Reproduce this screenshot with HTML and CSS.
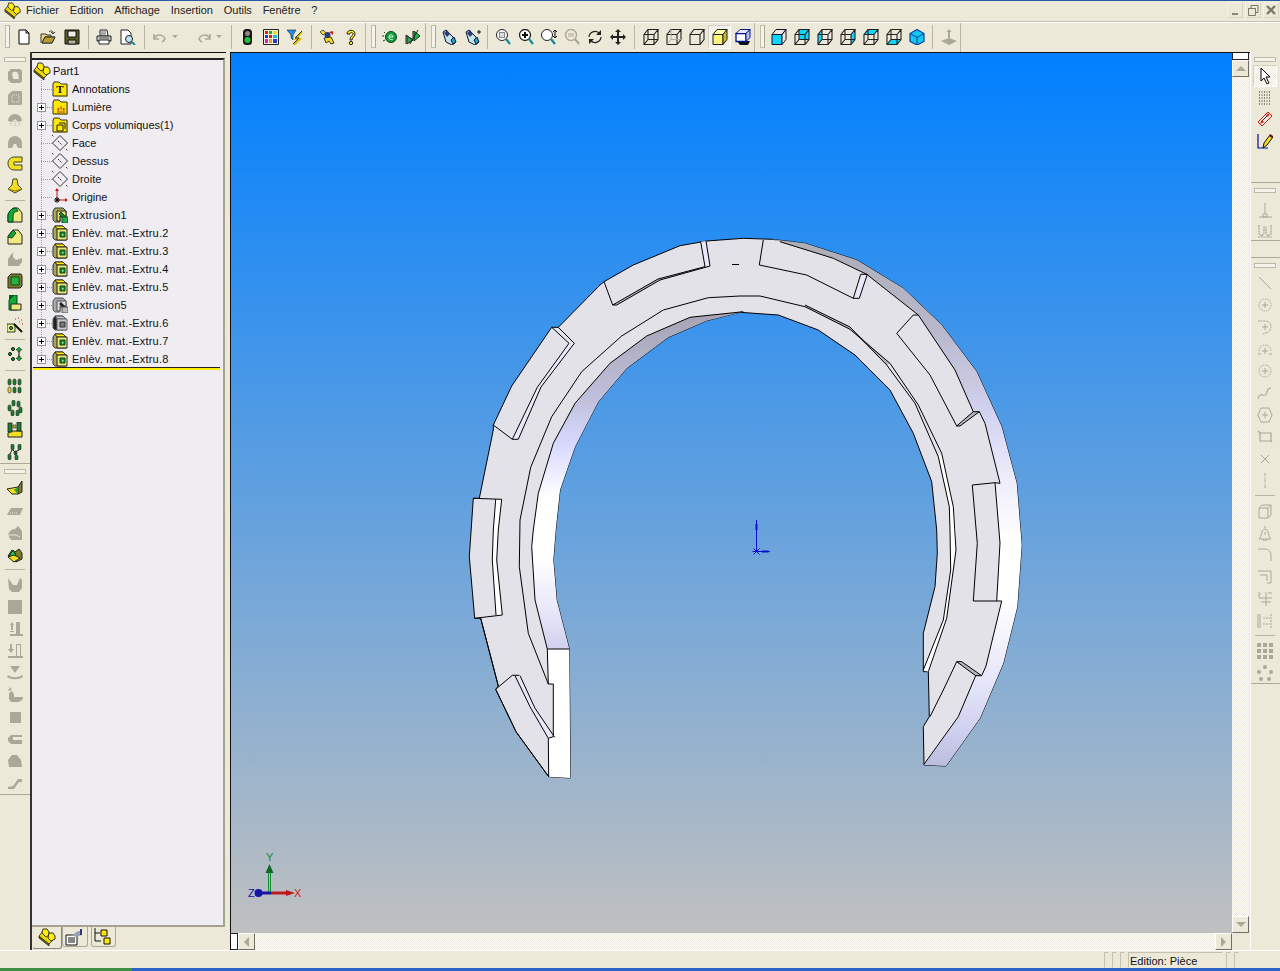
FILE: index.html
```html
<!DOCTYPE html>
<html lang="fr">
<head>
<meta charset="utf-8">
<title>Part1</title>
<link rel="stylesheet" href="styles.css">
</head>
<body>
<svg class="defs" width="0" height="0">
<defs>
<symbol id="part" viewBox="0 0 18 18"><path d="M1 8l10 8v2L1 10z" fill="#6e6800" stroke="#222" stroke-width=".8"/><path d="M1 8l5-6 11 8-6 6z" fill="#e8d800" stroke="#222" stroke-width=".8"/><path d="M5 1h4l2 3v3l-3 2-4-4z" fill="#ffec10" stroke="#222" stroke-width=".9"/><path d="M11 5h4l2 3v3l-4 2-3-3z" fill="#ffec10" stroke="#222" stroke-width=".9"/></symbol>
<symbol id="fold" viewBox="0 0 16 16"><path d="M1 3l1-2h5l2 2h6v12H1z" fill="#ffe800" stroke="#333"/><path d="M14 4h2v11H3v-0" fill="none" stroke="#8a8000"/></symbol>
<symbol id="plane" viewBox="0 0 18 18"><path d="M9 1.500L16.500 9 9 16.500 1.500 9z" fill="none" stroke="#333"/><path d="M1 1l2 2M15 15l2 2M7 7l4 4" stroke="#333" stroke-dasharray="2 1"/></symbol>
<symbol id="orig" viewBox="0 0 18 18"><path d="M6 12V2M6 12h9" stroke="#d01010" fill="none"/><path d="M6 0l-2 3h4zM17 12l-3-2v4z" fill="#d01010"/><path d="M4 10l4 4M8 10l-4 4M3 12h6M6 9v6" stroke="#000"/></symbol>
<symbol id="feat" viewBox="0 0 16 16"><path d="M1 4l2-3h8l3 3v11H3L1 13z" fill="#a8a858" stroke="#333"/><path d="M3 1h8l3 3H5z" fill="#ffe800" stroke="#333"/><path d="M5 4h10v11H5z" fill="#ece478" stroke="#222"/><path d="M8 7h5v5H8z" fill="#148c34" stroke="#0b4a1c"/><path d="M10 9h1.500v1.500H10z" fill="#b8e0a0"/></symbol>
<symbol id="extr" viewBox="0 0 16 16"><path d="M1 4l2-3h8l3 3v6H8v5H3L1 13z" fill="#a8a858" stroke="#333"/><path d="M5 4h9v5H8v5H5z" fill="#e8e070" stroke="#222"/><path d="M7 7l2-2 6 6-2 2z" fill="#1c8030" stroke="#0b4a1c"/><path d="M10 10h6v6h-6z" fill="#28b048" stroke="#0b4a1c"/></symbol>
<symbol id="feag" viewBox="0 0 16 16"><path d="M1 4l2-3h8l3 3v11H3L1 13z" fill="#222" stroke="#555"/><path d="M3 1h8l3 3H5z" fill="#bbb" stroke="#555"/><path d="M5 4h10v11H5z" fill="#c8c8c8" stroke="#666"/><path d="M8 7h5v5H8z" fill="#777" stroke="#333"/></symbol>
<symbol id="extg" viewBox="0 0 16 16"><path d="M1 4l2-3h8l3 3v6H8v5H3L1 13z" fill="#a8a8a8" stroke="#555"/><path d="M5 4h9v5H8v5H5z" fill="#ddd" stroke="#555"/><path d="M7 7l2-2 6 6-2 2z" fill="#222"/><path d="M10 10h6v6h-6z" fill="#bbb" stroke="#555"/></symbol>

<symbol id="new" viewBox="0 0 16 16"><path d="M3 1h7l3 3v11H3z" fill="#fff" stroke="#000"/><path d="M10 1v3h3" fill="none" stroke="#000"/></symbol>
<symbol id="open" viewBox="0 0 16 16"><path d="M1 14V5h5l1 1h4v2H5L2 14h10l3-6H5" fill="#e8d880" stroke="#333"/><path d="M2 14l3-6h10l-3 6z" fill="#b89c30" stroke="#333"/><path d="M9 3c2-2 4-1 4 1M15 3l-2 2-2-2" fill="none" stroke="#333"/></symbol>
<symbol id="save" viewBox="0 0 16 16"><path d="M1 1h14v14H1z" fill="#5c5c24" stroke="#111"/><path d="M4 2h8v6H4z" fill="#eee" stroke="#111"/><path d="M4 11h8v4H4z" fill="#b4b4a0" stroke="#111"/></symbol>
<symbol id="print" viewBox="0 0 16 16"><path d="M4 1h7l1 6H4z" fill="#fff" stroke="#222"/><path d="M1 7h14v5H1z" fill="#ccc" stroke="#222"/><path d="M3 11h10v4H3z" fill="#fff" stroke="#222"/><path d="M3 9h10M5 3h5M5 5h5" stroke="#555"/></symbol>
<symbol id="prev" viewBox="0 0 16 16"><path d="M1 1h7l3 3v11H1z" fill="#fff" stroke="#222"/><circle cx="9" cy="10" r="3.500" fill="#bfe4f4" stroke="#222"/><path d="M12 13l3 3" stroke="#148c9c" stroke-width="2"/></symbol>
<symbol id="undo" viewBox="0 0 16 16"><path d="M2 5v5h5M2 9c3-4 9-4 11 1-1 1-1 2-3 3" fill="none" stroke="#aca899" stroke-width="1.500"/></symbol>
<symbol id="redo" viewBox="0 0 16 16"><path d="M14 5v5H9M14 9c-3-4-9-4-11 1 1 1 1 2 3 3" fill="none" stroke="#aca899" stroke-width="1.500"/></symbol>
<symbol id="traf" viewBox="0 0 16 16"><rect x="4" y="0" width="9" height="16" rx="3.500" fill="#181818"/><circle cx="8.500" cy="4.500" r="2.500" fill="#8a8a80"/><circle cx="8.500" cy="11" r="3" fill="#14c838"/></symbol>
<symbol id="pal" viewBox="0 0 16 16"><path d="M0.500 0.500h15v15H0.500z" fill="#f4f0d8" stroke="#222"/><path d="M2 2h3v3H2z" fill="#e01818"/><path d="M6 2h3v3H6z" fill="#18a838"/><path d="M10 2h4v3h-4z" fill="#e8e018"/><path d="M2 6h3v3H2z" fill="#2038d8"/><path d="M6 6h3v3H6z" fill="#e01818"/><path d="M10 6h4v3h-4z" fill="#18b8e0"/><path d="M2 10h3v4H2z" fill="#e018c8"/><path d="M6 10h3v4H6z" fill="#e8a018"/><path d="M10 10h4v4h-4z" fill="#2038d8"/></symbol>
<symbol id="filt" viewBox="0 0 16 16"><path d="M0 1h9L6 6v5L4 9V6z" fill="#1c90f0" stroke="#222" stroke-width=".6"/><path d="M15 3L9 10h4l-6 6" fill="none" stroke="#d8c000" stroke-width="2"/><path d="M15 2L8 9h4l-6 6" fill="none" stroke="#333"/></symbol>
<symbol id="wiz" viewBox="0 0 16 16"><path d="M1 3l3-2 3 3-3 2z" fill="#f0dc20" stroke="#554"/><circle cx="8.500" cy="6" r="3" fill="#2c3c88"/><path d="M5 9l7-1 3 6-3 1-2-3-3 2z" fill="#f0dc20" stroke="#333"/><path d="M10 3l4-1v4z" fill="#d02010"/></symbol>
<symbol id="help" viewBox="0 0 16 16"><path d="M4 5c0-5 8-5 8 0 0 3-3 3-3 6H7c0-4 3-4 3-6 0-2-3-2-3 0z" fill="#ffe800" stroke="#222"/><circle cx="8" cy="14" r="1.700" fill="#ffe800" stroke="#222"/></symbol>
<symbol id="eic" viewBox="0 0 16 16"><circle cx="10" cy="8" r="5.500" fill="#129c3c" stroke="#0a3c1c"/><path d="M8 8h4c0-3-4-3-4 0s3 3 4 2" fill="none" stroke="#e0ffe0"/><path d="M3 3l1 1M1 7h2M2 12l2-1" stroke="#333"/></symbol>
<symbol id="fip" viewBox="0 0 16 16"><path d="M1 15V6l7 5V2" fill="none" stroke="#222"/><path d="M2 7l6 4-6 4z" fill="#18b848" stroke="#222"/><path d="M9 2l6 5-6 5z" fill="#18b848" stroke="#222"/><path d="M13 1L5 15" stroke="#222"/></symbol>
<symbol id="lamp" viewBox="0 0 16 16"><path d="M1 3l3-2 7 7 2 6-3 2-6-3z" fill="#c4e4ec" stroke="#113"/><path d="M2 4l3-3 3 4-3 3z" fill="#2c3c78"/><path d="M9 11l3-3 2 5-3 2z" fill="#18a8c8" stroke="#113"/></symbol>
<symbol id="lamp2" viewBox="0 0 16 16"><use href="#lamp"/><path d="M12 3h4M14 1v4" stroke="#111"/></symbol>
<symbol id="zfit" viewBox="0 0 16 16"><circle cx="7" cy="6" r="5.500" fill="#fff" stroke="#222"/><path d="M4 3h6v6H4z" fill="#888"/><path d="M5 4h4v4H5z" fill="#ddd"/><path d="M11 10l4 5" stroke="#1488a0" stroke-width="2.200"/></symbol>
<symbol id="zin" viewBox="0 0 16 16"><circle cx="7" cy="6" r="5.500" fill="#fff" stroke="#222" stroke-width="1.300"/><path d="M7 3v6M4 6h6" stroke="#111" stroke-width="2"/><path d="M11 10l4 5" stroke="#1488a0" stroke-width="2.200"/></symbol>
<symbol id="zar" viewBox="0 0 16 16"><circle cx="6" cy="6" r="5.500" fill="#fff" stroke="#222"/><path d="M14 1v8M12 3l2-2 2 2M12 7l2 2 2-2" fill="none" stroke="#111"/><path d="M10 10l4 5" stroke="#1488a0" stroke-width="2.200"/></symbol>
<symbol id="zout" viewBox="0 0 16 16"><circle cx="7" cy="6" r="5.500" fill="#ece9d8" stroke="#aca899" stroke-width="1.400"/><path d="M4 5h6M4 7h6" stroke="#aca899"/><path d="M11 10l4 5" stroke="#aca899" stroke-width="2.200"/></symbol>
<symbol id="rot" viewBox="0 0 16 16"><path d="M2 8a6 6 0 0 1 10-4M14 8a6 6 0 0 1-10 4" fill="none" stroke="#222" stroke-width="1.200"/><path d="M14 1v5H9zM2 15v-5h5z" fill="#222"/></symbol>
<symbol id="pan" viewBox="0 0 16 16"><path d="M8 0l3 3H9v4h4V5l3 3-3 3V9H9v4h2l-3 3-3-3h2V9H3v2L0 8l3-3v2h4V3H5z" fill="#222"/></symbol>
<symbol id="cw" viewBox="0 0 16 16"><path d="M1 5.500h10v10H1zM1 5.500l4-5h10l-4 5M11 5.500v10l4-5v-10M5 .5v10h10M5 10.500l-4 5" fill="none" stroke="#222" stroke-width="1.100"/></symbol>
<symbol id="chl" viewBox="0 0 16 16"><path d="M1 5.500h10v10H1zM1 5.500l4-5h10l-4 5M11 5.500v10l4-5v-10" fill="none" stroke="#222" stroke-width="1.100"/><path d="M5 .5v10h10M5 10.500l-4 5" fill="none" stroke="#aaa"/></symbol>
<symbol id="cno" viewBox="0 0 16 16"><path d="M1 5.500h10v10H1zM1 5.500l4-5h10l-4 5M11 5.500v10l4-5v-10" fill="none" stroke="#222" stroke-width="1.100"/></symbol>
<symbol id="csh" viewBox="0 0 16 16"><path d="M1 5.500h10v10H1z" fill="#fbf37a" stroke="#222"/><path d="M1 5.500l4-5h10l-4 5z" fill="#fffca8" stroke="#222"/><path d="M11 5.500v10l4-5v-10z" fill="#c8bc30" stroke="#222"/></symbol>
<symbol id="csd" viewBox="0 0 16 16"><path d="M2 12h13l-2 4H5z" fill="#111"/><path d="M1 4.500h10v8H1z" fill="#fff" stroke="#00148c" stroke-width="1.300"/><path d="M1 4.500l4-4h10l-4 4z" fill="#e8e8ff" stroke="#00148c"/><path d="M11 4.500v8l4-4v-8z" fill="#c0c0f0" stroke="#00148c"/></symbol>
<symbol id="vfr" viewBox="0 0 16 16"><path d="M1 5.500h10v10H1z" fill="#12d4f8" stroke="#113"/><path d="M1 5.500l4-5h10l-4 5zM11 5.500v10l4-5v-10z" fill="#ece9d8" stroke="#113"/></symbol>
<symbol id="vbk" viewBox="0 0 16 16"><path d="M5 .5h10v10H5z" fill="#12d4f8"/><use href="#cw"/></symbol>
<symbol id="vlf" viewBox="0 0 16 16"><path d="M1 5.500l4-5v10l-4 5z" fill="#12d4f8"/><use href="#cw"/></symbol>
<symbol id="vrt" viewBox="0 0 16 16"><path d="M11 5.500l4-5v10l-4 5z" fill="#12d4f8"/><use href="#cw"/></symbol>
<symbol id="vtp" viewBox="0 0 16 16"><path d="M1 5.500l4-5h10l-4 5z" fill="#12d4f8"/><use href="#cw"/></symbol>
<symbol id="vbt" viewBox="0 0 16 16"><path d="M1 15.500l4-5h10l-4 5z" fill="#12d4f8"/><use href="#cw"/></symbol>
<symbol id="viso" viewBox="0 0 16 16"><path d="M8 .5l7 4v8l-7 3.500-7-3.500v-8z" fill="#12c8f0" stroke="#0c3c9c" stroke-width="1.200"/><path d="M1 4.500l7 4 7-4M8 8.500V16" fill="none" stroke="#0c3c9c"/></symbol>
<symbol id="flat" viewBox="0 0 16 16"><path d="M8 9L16 12 8 16 0 12z" fill="#aca899"/><path d="M8 0l2.500 3H9v6H7V3H5.500z" fill="#aca899"/></symbol>

<symbol id="g1" viewBox="0 0 16 16"><path d="M1 4l3-3h9l2 2v10l-2 2H4l-3-3z" fill="#aca899"/><path d="M5 5a4 4 0 0 1 6 0l1 6H6z" fill="#ece9d8"/></symbol>
<symbol id="g2" viewBox="0 0 16 16"><path d="M1 5l4-4h9l1 1v12l-1 1H1z" fill="#aca899"/><path d="M5 5h7v7H5z" fill="none" stroke="#ece9d8" stroke-dasharray="1 1"/></symbol>
<symbol id="g3" viewBox="0 0 16 16"><path d="M1 9a7 7 0 0 1 14 0l-4 1-3-3-3 3z" fill="#aca899"/><path d="M3 11l2 3M8 9v5M13 11l-2 3" stroke="#aca899" stroke-dasharray="1 1"/></symbol>
<symbol id="g4" viewBox="0 0 16 16"><path d="M1 9a7 7 0 0 1 14 0v5h-4l-2-4H7l-2 4H1z" fill="#aca899"/></symbol>
<symbol id="yc" viewBox="0 0 16 16"><path d="M1 7a6 6 0 0 1 6-6h8v5H7v3h8v5H7a6 6 0 0 1-6-6z" fill="#f0e020" stroke="#443" /><path d="M7 6h8" stroke="#a09000"/></symbol>
<symbol id="ybell" viewBox="0 0 16 16"><path d="M6 1h4l1 6 4 4-7 4-7-4 4-4z" fill="#f0dc20" stroke="#443"/><path d="M1 11l7 2 7-2" fill="none" stroke="#8a8000"/></symbol>
<symbol id="h1" viewBox="0 0 16 16"><path d="M1 7l5-6h5l4 5v9H1z" fill="#f0e880" stroke="#222"/><path d="M1 9a8 8 0 0 1 8-8l2 3a5 5 0 0 0-5 5v6H1z" fill="#14a838" stroke="#0b4a1c"/></symbol>
<symbol id="h2" viewBox="0 0 16 16"><path d="M1 7l5-6h5l4 5v9H1z" fill="#f0e880" stroke="#222"/><path d="M1 8l5-7 3 3-4 5z" fill="#14a838" stroke="#0b4a1c"/></symbol>
<symbol id="gh" viewBox="0 0 16 16"><path d="M1 15V8l5-7v5l3 3 6-2v4l-3 4z" fill="#aca899"/></symbol>
<symbol id="gb" viewBox="0 0 16 16"><path d="M1 4l3-3h10l1 2v10l-2 2H1z" fill="#7c7c20" stroke="#222"/><path d="M4 4h8v8H4z" fill="#28b048" stroke="#0b4a1c"/></symbol>
<symbol id="gy" viewBox="0 0 16 16"><path d="M2 0h8v6H2z" fill="#085c24"/><path d="M2 5l5-5 3 0v15H2z" fill="#14a838" stroke="#0b4a1c"/><path d="M4 9h10v6H4z" fill="#f0e880" stroke="#222"/></symbol>
<symbol id="wand" viewBox="0 0 16 16"><path d="M0 7h8v8H0z" fill="#f0e880" stroke="#243"/><circle cx="4" cy="11" r="1.500" fill="#14a838" stroke="#132"/><path d="M15 15L7 7" stroke="#111" stroke-width="2"/><path d="M8 2h1M11 1h1M14 3h1M12 5h1M15 7h1" stroke="#a03030"/></symbol>
<symbol id="arrs" viewBox="0 0 16 16"><circle cx="3" cy="8" r="1.500" fill="#14a838" stroke="#111"/><circle cx="6" cy="3" r="1.500" fill="#14a838" stroke="#111"/><circle cx="6" cy="13" r="1.500" fill="#14a838" stroke="#111"/><path d="M12 1l3 3h-2v2h-2V4H9zM11 10h2v2h2l-3 3-3-3h2z" fill="#14a838" stroke="#111" stroke-width=".5"/><path d="M12 6v4" stroke="#111"/></symbol>
<symbol id="pl" viewBox="0 0 16 16"><g fill="#1c7c30" stroke="#222" stroke-width=".6"><rect x="1" y="1" width="3" height="6" rx="1.500"/><rect x="6" y="1" width="3" height="6" rx="1.500"/><rect x="11" y="1" width="3" height="6" rx="1.500"/></g><g fill="#d8d040" stroke="#222" stroke-width=".6"><rect x="1" y="9" width="3" height="6" rx="1.500"/></g><g fill="#1c7c30" stroke="#222" stroke-width=".6"><rect x="6" y="9" width="3" height="6" rx="1.500"/><rect x="11" y="9" width="3" height="6" rx="1.500"/></g></symbol>
<symbol id="pc" viewBox="0 0 16 16"><g fill="#1c7c30" stroke="#222" stroke-width=".6"><rect x="5" y="0" width="3" height="6" rx="1.500"/><rect x="10" y="1" width="3" height="6" rx="1.500"/><rect x="1" y="5" width="3" height="6" rx="1.500"/><rect x="12" y="7" width="3" height="6" rx="1.500"/><rect x="4" y="10" width="3" height="6" rx="1.500"/><rect x="9" y="10" width="3" height="6" rx="1.500"/></g></symbol>
<symbol id="pm" viewBox="0 0 16 16"><path d="M1 15v-4l4-2h10v6z" fill="#f0e020" stroke="#222"/><rect x="1" y="1" width="4" height="9" fill="#1c7c30" stroke="#222" stroke-width=".8"/><rect x="10" y="0" width="4" height="9" fill="#1c7c30" stroke="#222" stroke-width=".8"/><path d="M6 6h3V3H6z" fill="#c8c020" stroke="#222" stroke-width=".6"/></symbol>
<symbol id="pt" viewBox="0 0 16 16"><g fill="#1c7c30" stroke="#222" stroke-width=".6"><rect x="4" y="0" width="3" height="6" rx="1.500"/><rect x="11" y="0" width="3" height="6" rx="1.500"/><rect x="7" y="7" width="3" height="4" rx="1.500"/><rect x="1" y="10" width="3" height="6" rx="1.500"/><rect x="8" y="11" width="3" height="5" rx="1.500"/></g><path d="M5 6l-2 4M6 6l2 2 4-2M9 11V9" stroke="#222" fill="none"/></symbol>
<symbol id="fold3" viewBox="0 0 18 18"><path d="M1 10l11-2v7H6z" fill="#f0e020" stroke="#222"/><path d="M12 8l4-6v11l-4 2z" fill="#7c7c20" stroke="#222"/><path d="M8 11l4-3v7z" fill="#14a838"/></symbol>
<symbol id="gp" viewBox="0 0 16 16"><path d="M0 12l4-7h12l-3 7z" fill="#aca899"/><path d="M3 10h7" stroke="#ece9d8" stroke-dasharray="1 1"/></symbol>
<symbol id="gr" viewBox="0 0 16 16"><path d="M1 10a8 8 0 0 1 7-6l3-3 4 5v9H4z" fill="#aca899"/><path d="M1 10h8l4 2" stroke="#ece9d8" fill="none"/></symbol>
<symbol id="mix" viewBox="0 0 16 16"><path d="M1 9l4-6 3 2 4-3 3 4v6l-6 3z" fill="#7c7c20" stroke="#222"/><path d="M2 9l4-6 3 5-5 2z" fill="#14d040" stroke="#222"/><path d="M1 10l6-2 6 3-6 4z" fill="#f0e020" stroke="#222"/></symbol>
<symbol id="gu" viewBox="0 0 16 16"><path d="M1 1l5 7h4l3-7 2 2v8l-3 4H5l-3-3z" fill="#aca899"/></symbol>
<symbol id="gsq" viewBox="0 0 16 16"><path d="M1 1h14v14H1z" fill="#aca899"/></symbol>
<symbol id="gup" viewBox="0 0 16 16"><path d="M3 15h13v-2H3zM9 1h4v12H9zM5 1l2 3H3zM4 4h2v5H4zM3 10h4v1H3z" fill="#aca899"/></symbol>
<symbol id="gdn" viewBox="0 0 16 16"><path d="M1 15h15v-2H1zM9 1h5v12h-1V2h-3v11H9zM3 1h2v6H3zM1 6h6l-3 4z" fill="#aca899"/></symbol>
<symbol id="gbowl" viewBox="0 0 16 16"><path d="M3 1h10L8 8zM1 10c4 3 10 3 14 0l1 2c-5 3-11 3-16 0z" fill="#aca899"/></symbol>
<symbol id="gduck" viewBox="0 0 16 16"><path d="M2 6l3-2 2 3v3h9c0 3-3 5-6 5H4L2 12z" fill="#aca899"/><path d="M3 0l2 3-4 1z" fill="#aca899"/></symbol>
<symbol id="gsm" viewBox="0 0 16 16"><path d="M3 3h11v11H3z" fill="#aca899"/></symbol>
<symbol id="gcl" viewBox="0 0 16 16"><path d="M1 7l3-3h11v2H6v3h9v4H4l-3-3z" fill="#aca899"/></symbol>
<symbol id="gdo" viewBox="0 0 16 16"><path d="M1 7l4-5h5l4 5 1 7H2z" fill="#aca899"/></symbol>
<symbol id="gsl" viewBox="0 0 16 16"><path d="M1 12l5-1 5-7h4v3h-3l-5 7H1z" fill="#aca899"/></symbol>

<symbol id="arrow" viewBox="0 0 16 16"><path d="M4 0v13l3-3 3 6 2-1-3-6h4z" fill="#fff" stroke="#000"/></symbol>
<symbol id="grid" viewBox="0 0 16 16"><path d="M2 2h12M2 5h12M2 8h12M2 11h12M2 14h12" stroke="#222" stroke-dasharray="1 1.500"/></symbol>
<symbol id="dim" viewBox="0 0 16 16"><path d="M1 11l10-10 4 4-10 10z" fill="none" stroke="#d01818"/><path d="M4 11l7-7" stroke="#222"/><path d="M3 13l2-4 2 2zM13 2l-4 2 2 2z" fill="#d01818"/></symbol>
<symbol id="sk" viewBox="0 0 16 16"><path d="M1 1v14h10" fill="none" stroke="#000c9c" stroke-width="1.200"/><path d="M6 15l1-5 6-8 3 2-6 8z" fill="#f0e020" stroke="#111"/><path d="M12 3l1-2 3 2-1 2z" fill="#6c1010"/></symbol>
<symbol id="r1" viewBox="0 0 16 16"><path d="M8 1v11M2 15h13M6 12h4v3H6z" fill="none" stroke="#aca899"/></symbol>
<symbol id="r2" viewBox="0 0 16 16"><path d="M1 15h14M2 3v9l3 2 2-3V4M14 3v9l-3 2-2-3V4" fill="none" stroke="#aca899" stroke-width="1.200" stroke-dasharray="2 .6"/></symbol>
<symbol id="r3" viewBox="0 0 16 16"><path d="M2 2l12 12" stroke="#aca899"/></symbol>
<symbol id="r4" viewBox="0 0 16 16"><circle cx="8" cy="8" r="6" fill="none" stroke="#aca899" stroke-dasharray="1.500 .8"/><path d="M8 5v6M5 8h6" stroke="#aca899"/></symbol>
<symbol id="r5" viewBox="0 0 16 16"><path d="M1 2h7a6 6 0 0 1 0 12l-2 1" fill="none" stroke="#aca899" stroke-dasharray="2 .6"/><path d="M8 5v6M5 8h6" stroke="#aca899"/></symbol>
<symbol id="r6" viewBox="0 0 16 16"><path d="M2 10a6 6 0 0 1 12 0" fill="none" stroke="#aca899" stroke-dasharray="1.500 .8"/><path d="M8 7v6M5 10h6M1 13h3M12 13h3" stroke="#aca899"/></symbol>
<symbol id="r7" viewBox="0 0 16 16"><path d="M1 14c1-4 3-5 5-4s4-1 4-3 2-4 4-4" fill="none" stroke="#aca899" stroke-width="1.100"/></symbol>
<symbol id="r8" viewBox="0 0 16 16"><path d="M4 1h8l3 7-3 7H4L1 8z" fill="none" stroke="#aca899"/><path d="M8 5v6M5 8h6" stroke="#aca899"/></symbol>
<symbol id="r9" viewBox="0 0 16 16"><path d="M3 4h11v8H3zM1 2l3 3M13 11l2 2" fill="none" stroke="#aca899" stroke-width="1.200"/></symbol>
<symbol id="r10" viewBox="0 0 16 16"><path d="M4 4l8 8M12 4l-8 8" stroke="#aca899"/></symbol>
<symbol id="r11" viewBox="0 0 16 16"><path d="M8 0v16" stroke="#aca899" stroke-dasharray="3 1 1 1"/></symbol>
<symbol id="r12" viewBox="0 0 16 16"><path d="M2 5h9v10H2zM2 5l3-3h9l-3 3M11 15l3-3V2" fill="none" stroke="#aca899"/></symbol>
<symbol id="r13" viewBox="0 0 16 16"><path d="M8 1v2M2 14c3-2 2-10 6-10s3 8 6 10zM6 14a2 2 0 0 0 4 0M8 7v3" fill="none" stroke="#aca899"/></symbol>
<symbol id="r14" viewBox="0 0 16 16"><path d="M1 2h7c4 0 6 3 6 6v6" fill="none" stroke="#aca899"/></symbol>
<symbol id="r15" viewBox="0 0 16 16"><path d="M1 2h13v12H10M3 6h7v6" fill="none" stroke="#aca899"/></symbol>
<symbol id="r16" viewBox="0 0 16 16"><path d="M9 1v14M2 7h13M4 11h10M1 2c3-1 3 2 1 2s2 2 0 3M11 2h4" fill="none" stroke="#aca899"/></symbol>
<symbol id="r17" viewBox="0 0 16 16"><path d="M1 1v14M3 1v14" stroke="#aca899"/><path d="M14 1v14M6 5h7M6 11h7" stroke="#aca899" stroke-dasharray="2 1"/></symbol>
<symbol id="r18" viewBox="0 0 16 16"><path d="M0 0h4v4H0zM6 0h4v4H6zM12 0h4v4h-4zM0 6h4v4H0zM6 6h4v4H6zM12 6h4v4h-4zM0 12h4v4H0zM6 12h4v4H6zM12 12h4v4h-4z" fill="#aca899"/></symbol>
<symbol id="r19" viewBox="0 0 16 16"><g fill="#aca899"><circle cx="8" cy="2" r="2"/><circle cx="2" cy="7" r="2"/><circle cx="14" cy="7" r="2"/><circle cx="4" cy="14" r="2"/><circle cx="12" cy="14" r="2"/></g></symbol>
<symbol id="wdoc" viewBox="0 0 18 18"><path d="M1 7h11v10H1z" fill="#fff" stroke="#111"/><path d="M3 10h7M3 12h7M3 14h7" stroke="#111"/><path d="M7 7l6-4 4 0v4l-6 2z" fill="#98a0b4"/><path d="M15 1h2v6h-2z" fill="#2c3c78"/></symbol>
<symbol id="cfg" viewBox="0 0 18 18"><path d="M1 0v13h6M1 5h5" fill="none" stroke="#111"/><path d="M7 2h6v6H7zM10 10h6v6h-6z" fill="#ffe800" stroke="#111"/></symbol>
</defs>
</svg>

<div class="app">
  <div class="topline"></div>
  <div class="menubar">
    <svg class="logo"><use href="#part"/></svg>
    <span class="mi m1">Fichier</span><span class="mi">Edition</span><span class="mi">Affichage</span><span class="mi">Insertion</span><span class="mi">Outils</span><span class="mi">Fenêtre</span><span class="mi">?</span>
    <div class="winbtns">
      <div class="wb"><svg class="wi" viewBox="0 0 12 12"><path d="M3 9h6v2H3z" fill="#8b8878"/></svg></div>
      <div class="wb"><svg class="wi" viewBox="0 0 12 12"><path d="M1.500 4.500h7v7h-7zM4 4V1.500h7v7H9" fill="none" stroke="#7c796a"/><path d="M1 4h8v1H1zM4 1h7v1H4z" fill="#7c796a"/></svg></div>
      <div class="wb"><svg class="wi" viewBox="0 0 12 12"><path d="M2 2l8 8M10 2l-8 8" stroke="#7c796a" stroke-width="2.400"/></svg></div>
    </div>
  </div>
  <div class="barline"></div>
  <div class="toolbars">
    <div class="tbar t1">
      <i class="grip"></i>
      <div class="b"><svg class="i"><use href="#new"/></svg></div><div class="b"><svg class="i"><use href="#open"/></svg></div><div class="b"><svg class="i"><use href="#save"/></svg></div>
      <i class="sep"></i>
      <div class="b"><svg class="i"><use href="#print"/></svg></div><div class="b"><svg class="i"><use href="#prev"/></svg></div>
      <i class="sep"></i>
      <div class="b wide"><svg class="i"><use href="#undo"/></svg><i class="caret"></i></div>
      <div class="b wide gapl"><svg class="i"><use href="#redo"/></svg><i class="caret"></i></div>
      <i class="sep s2"></i>
      <div class="b"><svg class="i"><use href="#traf"/></svg></div><div class="b"><svg class="i"><use href="#pal"/></svg></div><div class="b"><svg class="i"><use href="#filt"/></svg></div>
      <i class="sep"></i>
      <div class="b"><svg class="i"><use href="#wiz"/></svg></div><div class="b"><svg class="i"><use href="#help"/></svg></div>
    </div>
    <div class="tbar t2">
      <i class="grip"></i>
      <div class="b"><svg class="i"><use href="#eic"/></svg></div><div class="b"><svg class="i"><use href="#fip"/></svg></div>
    </div>
    <div class="tbar t3">
      <i class="grip"></i>
      <div class="c"><svg class="i"><use href="#lamp"/></svg></div><div class="c"><svg class="i"><use href="#lamp2"/></svg></div>
      <i class="sep s5"></i>
      <div class="c"><svg class="i"><use href="#zfit"/></svg></div><div class="c"><svg class="i"><use href="#zin"/></svg></div><div class="c"><svg class="i"><use href="#zar"/></svg></div><div class="c"><svg class="i"><use href="#zout"/></svg></div><div class="c"><svg class="i"><use href="#rot"/></svg></div><div class="c"><svg class="i"><use href="#pan"/></svg></div>
      <i class="sep s4"></i>
      <div class="c"><svg class="i"><use href="#cw"/></svg></div><div class="c"><svg class="i"><use href="#chl"/></svg></div><div class="c"><svg class="i"><use href="#cno"/></svg></div><div class="c on"><svg class="i"><use href="#csh"/></svg></div><div class="c"><svg class="i"><use href="#csd"/></svg></div>
    </div>
    <div class="tbar t4">
      <i class="grip"></i>
      <div class="c"><svg class="i"><use href="#vfr"/></svg></div><div class="c"><svg class="i"><use href="#vbk"/></svg></div><div class="c"><svg class="i"><use href="#vlf"/></svg></div><div class="c"><svg class="i"><use href="#vrt"/></svg></div><div class="c"><svg class="i"><use href="#vtp"/></svg></div><div class="c"><svg class="i"><use href="#vbt"/></svg></div><div class="c"><svg class="i"><use href="#viso"/></svg></div>
      <i class="sep s6"></i>
      <div class="c"><svg class="i"><use href="#flat"/></svg></div>
    </div>
  </div>

  <div class="main">
    <div class="lstrip">
      <i class="hgrip lg"></i>
      <div class="lb"><svg class="i"><use href="#g1"/></svg></div><div class="lb"><svg class="i"><use href="#g2"/></svg></div><div class="lb"><svg class="i"><use href="#g3"/></svg></div><div class="lb"><svg class="i"><use href="#g4"/></svg></div><div class="lb"><svg class="i"><use href="#yc"/></svg></div><div class="lb"><svg class="i"><use href="#ybell"/></svg></div>
      <i class="ls ls1"></i>
      <div class="lb"><svg class="i"><use href="#h1"/></svg></div><div class="lb"><svg class="i"><use href="#h2"/></svg></div><div class="lb"><svg class="i"><use href="#gh"/></svg></div><div class="lb"><svg class="i"><use href="#gb"/></svg></div><div class="lb"><svg class="i"><use href="#gy"/></svg></div><div class="lb"><svg class="i"><use href="#wand"/></svg></div>
      <i class="ls ls1"></i>
      <div class="lb"><svg class="i"><use href="#arrs"/></svg></div>
      <i class="ls ls2"></i>
      <div class="lb"><svg class="i"><use href="#pl"/></svg></div><div class="lb"><svg class="i"><use href="#pc"/></svg></div><div class="lb"><svg class="i"><use href="#pm"/></svg></div><div class="lb"><svg class="i"><use href="#pt"/></svg></div>
      <div class="sectline"></div>
      <i class="hgrip lg2"></i>
      <div class="lb"><svg class="i big"><use href="#fold3"/></svg></div>
      <div class="lb l1m"><svg class="i"><use href="#gp"/></svg></div><div class="lb"><svg class="i"><use href="#gr"/></svg></div><div class="lb"><svg class="i"><use href="#mix"/></svg></div>
      <i class="ls ls3"></i>
      <div class="lb"><svg class="i"><use href="#gu"/></svg></div><div class="lb"><svg class="i"><use href="#gsq"/></svg></div><div class="lb"><svg class="i"><use href="#gup"/></svg></div><div class="lb"><svg class="i"><use href="#gdn"/></svg></div><div class="lb"><svg class="i"><use href="#gbowl"/></svg></div><div class="lb"><svg class="i"><use href="#gduck"/></svg></div><div class="lb"><svg class="i"><use href="#gsm"/></svg></div><div class="lb"><svg class="i"><use href="#gcl"/></svg></div><div class="lb"><svg class="i"><use href="#gdo"/></svg></div><div class="lb"><svg class="i"><use href="#gsl"/></svg></div>
      <div class="sectline"></div>
    </div>

    <div class="treecol">
      <div class="treehead"></div>
      <div class="panel">
        <div class="row root"><svg class="ti big"><use href="#part"/></svg><span class="label lroot">Part1</span></div>
        <div class="row"><span class="tw"></span><span class="icwrap"><svg class="ti"><use href="#fold"/></svg><b class="badge">T</b></span><span class="label">Annotations</span></div>
        <div class="row"><span class="tw"><i class="exp"></i></span><span class="icwrap"><svg class="ti"><use href="#fold"/></svg><svg class="ov" viewBox="0 0 10 10"><path d="M1 8h8M2 7l1-3M5 6V2M8 7L7 4M1 5h2M7 5h2" stroke="#c03010"/></svg></span><span class="label">Lumière</span></div>
        <div class="row"><span class="tw"><i class="exp"></i></span><span class="icwrap"><svg class="ti"><use href="#fold"/></svg><svg class="ov" viewBox="0 0 10 10"><path d="M1 3h6v6H1zM3 1h6v6" fill="none" stroke="#222"/></svg></span><span class="label">Corps volumiques(1)</span></div>
        <div class="row"><span class="tw"></span><svg class="ti wide18"><use href="#plane"/></svg><span class="label">Face</span></div>
        <div class="row"><span class="tw"></span><svg class="ti wide18"><use href="#plane"/></svg><span class="label">Dessus</span></div>
        <div class="row"><span class="tw"></span><svg class="ti wide18"><use href="#plane"/></svg><span class="label">Droite</span></div>
        <div class="row"><span class="tw last"></span><svg class="ti wide18"><use href="#orig"/></svg><span class="label">Origine</span></div>
        <div class="row"><span class="tw"><i class="exp"></i></span><svg class="ti"><use href="#extr"/></svg><span class="label sp3">Extrusion1</span></div>
        <div class="row"><span class="tw"><i class="exp"></i></span><svg class="ti"><use href="#feat"/></svg><span class="label sp2">Enlèv. mat.-Extru.2</span></div>
        <div class="row"><span class="tw"><i class="exp"></i></span><svg class="ti"><use href="#feat"/></svg><span class="label sp2">Enlèv. mat.-Extru.3</span></div>
        <div class="row"><span class="tw"><i class="exp"></i></span><svg class="ti"><use href="#feat"/></svg><span class="label sp2">Enlèv. mat.-Extru.4</span></div>
        <div class="row"><span class="tw"><i class="exp"></i></span><svg class="ti"><use href="#feat"/></svg><span class="label sp2">Enlèv. mat.-Extru.5</span></div>
        <div class="row"><span class="tw"><i class="exp"></i></span><svg class="ti"><use href="#extg"/></svg><span class="label sp3">Extrusion5</span></div>
        <div class="row"><span class="tw"><i class="exp"></i></span><svg class="ti"><use href="#feag"/></svg><span class="label sp2">Enlèv. mat.-Extru.6</span></div>
        <div class="row"><span class="tw"><i class="exp"></i></span><svg class="ti"><use href="#feat"/></svg><span class="label sp2">Enlèv. mat.-Extru.7</span></div>
        <div class="row"><span class="tw end"><i class="exp"></i></span><svg class="ti"><use href="#feat"/></svg><span class="label sp2">Enlèv. mat.-Extru.8</span></div>
        <div class="rollback"></div>
      </div>
      <div class="tabs">
        <div class="tab active"><svg class="tabic"><use href="#part"/></svg></div>
        <div class="tab t2nd"><svg class="tabic"><use href="#wdoc"/></svg></div>
        <div class="tab t3rd"><svg class="tabic"><use href="#cfg"/></svg></div>
      </div>
    </div>

    <div class="view">
      <div class="viewrow">
        <div class="canvas">
          <svg class="scene" viewBox="231 53 1001 880">
            <defs>
              <linearGradient id="gr-out" gradientUnits="userSpaceOnUse" x1="0" y1="240" x2="0" y2="766">
                <stop offset="0" stop-color="#aeaeb8"/><stop offset=".17" stop-color="#b8b8cc"/><stop offset=".34" stop-color="#d4d4f4"/><stop offset=".46" stop-color="#eeeefc"/><stop offset=".57" stop-color="#fff"/><stop offset=".68" stop-color="#fff"/><stop offset=".84" stop-color="#e6e6fa"/><stop offset=".93" stop-color="#d0d0f0"/><stop offset="1" stop-color="#bcbcdc"/>
              </linearGradient>
              <linearGradient id="gr-in" gradientUnits="userSpaceOnUse" x1="0" y1="312" x2="0" y2="650">
                <stop offset="0" stop-color="#a4a4b4"/><stop offset=".26" stop-color="#c0c0dc"/><stop offset=".39" stop-color="#d8d8ff"/><stop offset=".55" stop-color="#fff"/><stop offset=".73" stop-color="#fff"/><stop offset=".88" stop-color="#e8e8fa"/><stop offset="1" stop-color="#d0d0f0"/>
              </linearGradient>
            </defs>
            <polygon class="face" points="548.700,776.700 516,731.700 495.700,689.300 498.300,686 480.700,618.300 474.700,618.300 469.300,556.700 473.300,498.300 479.300,498.300 493.300,430 493.300,425 511.700,386 551.700,327.300 558.300,327.300 600,285 604,281.700 633.300,265 680,245.700 706.700,241 743.300,238.300 771.700,239.300 805,243.300 856.700,260 903.300,288.300 941.700,325 976.700,371.700 1001.700,426.700 1016.700,483.300 1021.700,545 1017.300,606.700 1003.300,663.300 980,718.300 946,766 924,765 923.300,726.700 929.300,716.700 928.300,671.700 923.300,671.700 923.300,633.300 935,586.700 937.300,553.300 936.700,530 931.700,481.700 913.300,433.300 890,390 855,355 818.300,330 778.300,315 740,312.300 706.700,320.700 668.300,337.300 626.700,368.300 598.300,401.700 575,446.700 560,490 555.700,530 553.300,560 556.700,600 569.300,649 570.300,778"/>
            <polygon class="bandout" points="771.700,239.300 805,243.300 856.700,260 903.300,288.300 941.700,325 976.700,371.700 1001.700,426.700 1016.700,483.300 1021.700,545 1017.300,606.700 1003.300,663.300 980,718.300 946,766 924,765 958.300,716.700 975.700,675.700 981.700,675.700 986,666 1001.700,601 996.700,601 1000,543 995,482.700 1000,483.300 985,423.300 979.300,411.700 973.300,411.700 955,370 918.300,315 866.700,274.300 833.300,258.300 780,241.700"/>
            <polygon class="bandin" points="743.300,311.700 690,317.300 646.700,336 610,363.300 575,403.300 553.300,443.300 538.300,493.300 533.300,530 531.700,546.700 535,600 547.300,649 569.300,649 556.700,600 553.300,560 555.700,530 560,490 575,446.700 598.300,401.700 626.700,368.300 668.300,337.300 706.700,320.700"/>
            <polygon class="white" points="547.300,649 569.300,649 570.300,778 548.700,776.700 548.300,738.300 553.300,736.700 553.300,684 548.300,684"/>
            <polygon class="whites" points="950,530 950.700,570 943.300,620 923.300,670 928.300,671.700 946.700,618.300 956,550 956,530"/>
            <polygon class="whites" points="949.300,506.700 950,530 956,530 953.300,506.700 941.700,453.300 938.300,456.700"/>
            <polygon class="wall" points="700.700,241.700 705,266.700 710,266 706,241"/>
            <polygon class="wallg" points="710,266 660,280 616.700,305 612.700,305 658,279 705,266.700"/>
            <polygon class="wall" points="569,343.300 574.300,343.300 541,387 518.300,439.300 512.300,439.300 537.300,387.300"/>
            <polygon class="whites" points="495.700,499.300 501.700,499.300 498.300,530 496.700,560 502.300,615 496,615 492.300,560 493.300,530"/>
            <polygon class="wall" points="515,675.700 520,675.700 535,708.300 554.700,737.300 548.300,738.300 530,706.700"/>
            <polygon class="wall" points="853.300,298.300 859.300,298.300 867.300,274.300 860.700,274.300"/>
            <polygon class="wallg" points="956.700,426 960,426 979.300,411.700 973.300,411.700"/>
            <polygon class="wallg" points="956.700,661.700 961.700,661.700 981.700,675.700 975.700,675.700"/>
            <polygon class="wallg" points="805,306.700 850,329.300 886.700,365 890,363.300 850,327 805,305"/>
            <g class="edges">
              <polyline points="548.700,776.700 516,731.700 495.700,689.300 512.300,675.300 519.300,675.300"/>
              <polyline points="498.300,686 480.700,618.300"/>
              <polyline points="474.700,618.300 502.300,615 496.700,560 498.300,530 501.700,499.300 473.300,498.300"/>
              <polyline points="496,615 492.300,560 493.300,530 495.700,499.300"/>
              <polyline points="493.300,425 512.300,439.300 518.300,439.300 541,387 574.300,343.300 558.300,327.300"/>
              <polyline points="512.300,439.300 537.300,387.300 569,343.300 551.700,327.300"/>
              <polyline points="604,281.700 612.700,305 616.700,305 660,280 710,266 706,241"/>
              <polyline points="612.700,305 658,279 705,266.700 700.700,241.700"/>
              <polyline points="743.300,311.700 690,317.300 646.700,336 610,363.300 575,403.300 553.300,443.300 538.300,493.300 533.300,530 531.700,546.700 535,600 547.300,649 569.300,649"/>
              <polyline points="708.300,297.700 663.300,310 621.700,336 581.700,371.700 551.700,416.700 530.700,467.300 520,520 519.300,566.700 528.300,633.300 548.300,684"/>
              <polyline points="708.300,297.700 740,296 760,296 805,306.700 850,329.300 890,363.300 918.300,405 941.700,453.300 953.300,506.700 956,550 946.700,618.300 928.300,671.700"/>
              <polyline points="805,305 850,327 886.700,365 915,403.300 938.300,456.700 949.300,506.700 950,530 950.700,570 943.300,620 923.300,670"/>
              <polyline points="547.300,649 548.300,684 553.300,684 553.300,736.700 548.300,738.300 548.700,776.700"/>
              <polyline points="515,675.700 530,706.700 548.300,738.300"/>
              <polyline points="520,675.700 535,708.300 554.700,737.300"/>
              <polyline points="763.300,240 759.300,265 806.700,275 853.300,298.300 859.300,298.300 867.300,274.300 860.700,274.300 853.300,298.300"/>
              <polyline points="780,241.700 833.300,258.300 866.700,274.300 918.300,315 913.300,315 896.700,333.300 930,375 956.700,426 960,426 979.300,411.700 973.300,411.700 955,370 918.300,315"/>
              <polyline points="956.700,426 973.300,411.700"/>
              <polyline points="979.300,411.700 985,423.300 1000,483.300 995,482.700 972.300,485 977.300,543.300 973.300,601 1001.700,601 986,666 981.700,675.700"/>
              <polyline points="995,482.700 1000,543 996.700,601"/>
              <polyline points="924,764.300 958.300,716.700 975.700,675.700 981.700,675.700 961.700,661.700 956.700,661.700 943.300,690 930,716.700"/>
              <polyline points="956.700,661.700 975.700,675.700"/>
              <line x1="732" y1="264.500" x2="739" y2="264.500"/>
            </g>
            <g class="origin">
              <path d="M756.500 520v31M753.500 548.500l6 6M759.500 548.500l-6 6M752.500 551.500h17"/>
              <path class="fillb" d="M755.500 524h2v6h-2zM762 550.500h6l2 1-2 1h-6z"/>
            </g>
            <g class="triad">
              <path d="M269.500 893v-24" stroke="#148c34" stroke-width="3"/>
              <path d="M269.500 872v20" stroke="#8cd09c" stroke-width="1"/>
              <path d="M269.500 864l-4 9h8z" fill="#0e6826"/>
              <path d="M271 893h16" stroke="#c01818" stroke-width="3"/>
              <path d="M295 893l-9-3v6z" fill="#c01818"/>
              <path d="M262 893h9" stroke="#1414a0" stroke-width="3"/>
              <circle cx="258.500" cy="893" r="4" fill="#1414a8"/>
              <text class="ax axy" x="266" y="861">Y</text>
              <text class="ax axx" x="294" y="897">X</text>
              <text class="ax axz" x="248" y="897">Z</text>
            </g>
          </svg>
        </div>
        <div class="vscroll">
          <div class="thumbv"></div>
          <div class="sbtn"><i class="au"></i></div>
          <div class="strack"></div>
          <div class="sbtn"><i class="ad"></i></div>
        </div>
      </div>
      <div class="hscroll">
        <div class="thumbh"></div>
        <div class="sbtn"><i class="al"></i></div>
        <div class="strack"></div>
        <div class="sbtn"><i class="ar"></i></div>
        <div class="corner"></div>
      </div>
    </div>

    <div class="rstrip">
      <div class="rsec rs1">
        <i class="hgrip"></i>
        <div class="rb on"><svg class="i"><use href="#arrow"/></svg></div><div class="rb"><svg class="i"><use href="#grid"/></svg></div><div class="rb"><svg class="i"><use href="#dim"/></svg></div><div class="rb"><svg class="i"><use href="#sk"/></svg></div>
      </div>
      <div class="rsec rs2">
        <i class="hgrip"></i>
        <div class="rb r20"><svg class="i"><use href="#r1"/></svg></div><div class="rb r20"><svg class="i"><use href="#r2"/></svg></div>
      </div>
      <div class="rsec rs3">
        <i class="hgrip"></i>
        <div class="rb r22"><svg class="i"><use href="#r3"/></svg></div><div class="rb r22"><svg class="i"><use href="#r4"/></svg></div><div class="rb r22"><svg class="i"><use href="#r5"/></svg></div><div class="rb r22"><svg class="i"><use href="#r6"/></svg></div><div class="rb r22"><svg class="i"><use href="#r4"/></svg></div><div class="rb r22"><svg class="i"><use href="#r7"/></svg></div><div class="rb r22"><svg class="i"><use href="#r8"/></svg></div><div class="rb r22"><svg class="i"><use href="#r9"/></svg></div><div class="rb r22"><svg class="i"><use href="#r10"/></svg></div><div class="rb r22"><svg class="i"><use href="#r11"/></svg></div>
        <i class="rsep"></i>
        <div class="rb r22"><svg class="i"><use href="#r12"/></svg></div><div class="rb r22"><svg class="i"><use href="#r13"/></svg></div><div class="rb r22"><svg class="i"><use href="#r14"/></svg></div><div class="rb r22"><svg class="i"><use href="#r15"/></svg></div><div class="rb r22"><svg class="i"><use href="#r16"/></svg></div><div class="rb r22"><svg class="i"><use href="#r17"/></svg></div>
        <i class="rsep"></i>
        <div class="rb r22"><svg class="i"><use href="#r18"/></svg></div><div class="rb r22"><svg class="i"><use href="#r19"/></svg></div>
      </div>
    </div>
  </div>

  <div class="status">
    <i class="pane"></i><i class="pane"></i><i class="pane"></i>
    <span class="pane text">Edition: Pièce</span>
    <i class="pane"></i><i class="pane"></i>
  </div>
  <div class="taskbar"><div class="tstart"></div><div class="trest"></div></div>
</div>
</body>
</html>
```
FILE: styles.css
```css
* { box-sizing: border-box; }
html, body { margin: 0; padding: 0; height: 100%; overflow: hidden; }
body { background: #ece9d8; font: 11px "Liberation Sans", Arial, sans-serif; color: #111; }
i { display: block; font-style: normal; }
.defs { position: absolute; }
.app { width: 1280px; height: 971px; display: flex; flex-direction: column; }
.topline { height: 1px; background: #2a58a8; }

.menubar { height: 20px; display: flex; align-items: center; padding: 0 0 2px 4px; }
.logo { width: 17px; height: 17px; margin-right: 5px; }
.mi { margin-right: 10.800px; color: #222; }
.winbtns { margin-left: auto; display: flex; gap: 2px; padding-right: 1px; }
.wb { width: 16px; height: 16px; display: flex; align-items: center; justify-content: center; border: 1px solid #f4f2e6; border-right-color: #d8d5c4; border-bottom-color: #d8d5c4; }
.wi { width: 12px; height: 12px; }
.barline { height: 1px; background: #c4c2b6; }

.toolbars { height: 30px; display: flex; border-top: 1px solid #fff; }
.tbar { display: flex; align-items: center; height: 29px; padding-bottom: 2px; border-right: 1px solid #b9b6a6; }
.t1 { width: 366px; padding-left: 5px; }
.t2 { width: 60px; padding-left: 5px; }
.t3 { width: 329px; padding-left: 5px; }
.t4 { width: 206px; padding-left: 5px; }
.grip { width: 5px; height: 23px; margin-right: 2px; border: 1px solid #c0bdae; border-right-color: #a8a596; background: #f6f4ea; flex: none; }
.t2 .grip { margin-right: 1px; }
.b, .c { height: 24px; flex: none; display: flex; align-items: center; justify-content: center; }
.b { width: 24px; }
.c { width: 23px; }
.c.on { background: repeating-conic-gradient(#fff 0 25%, #ece9d8 0 50%) 0 0 / 2px 2px; border: 1px solid #d4d1c2; border-right-color: #fff; border-bottom-color: #fff; }
.i { width: 16px; height: 16px; display: block; flex: none; }
.i.big { width: 18px; height: 18px; }
.wide { width: 34px; justify-content: flex-start; padding-left: 4px; gap: 4px; }
.gapl { margin-left: 8px; padding-left: 6px; }
.caret { width: 0; height: 0; border: 3px solid transparent; border-top: 3px solid #aca899; border-bottom: 0; }
.sep { width: 1px; height: 24px; background: #b9b6a6; margin: 0 3px 0 4px; flex: none; }
.s2 { margin: 0 3px 0 7px; }
.s4 { margin: 0 4px 0 5px; }
.s5 { margin: 0 3px 0 3px; }
.s6 { margin: 0 4px 0 4px; }

.main { flex: 1; display: flex; height: 898px; min-height: 0; }
.lstrip { width: 30px; flex: none; display: flex; flex-direction: column; align-items: center; padding-top: 5px; }
.hgrip { width: 22px; height: 5px; margin-top: 0; border: 1px solid #bdbaab; background: #f6f4ea; flex: none; }
.lg { margin-bottom: 3px; }
.lg2 { margin: 5px 0 3px; }
.lb { width: 26px; height: 22px; flex: none; display: flex; align-items: center; justify-content: center; }
.l1m { margin-top: 1px; }
.ls { width: 20px; height: 1px; background: #b9b6a6; flex: none; }
.ls1 { margin: 3px 0; }
.ls2 { margin: 5px 0 4px; }
.ls3 { margin: 3px 0 4px; }
.sectline { width: 30px; height: 1px; background: #aca899; flex: none; }

.treecol { width: 200px; flex: none; display: flex; flex-direction: column; border-left: 2px solid #333; padding-right: 5px; }
.treehead { height: 6px; border-top: 1px solid #111; flex: none; margin-right: -1px; }
.panel { flex: 1; background: #efedf1; border-top: 2px solid #222; border-right: 2px solid #a5a294; border-bottom: 2px solid #a5a294; padding-top: 2px; display: flex; flex-direction: column; min-height: 0; }
.row { height: 18px; flex: none; display: flex; align-items: center; padding-left: 4px; }
.row.root { padding-left: 1px; }
.ti { width: 16px; height: 16px; flex: none; display: block; }
.ti.big { width: 18px; height: 18px; }
.ti.wide18 { width: 18px; height: 18px; margin: 0 -1px; }
.tw { width: 16px; height: 18px; flex: none; padding: 5px 0 0 1px; background:
  repeating-linear-gradient(to bottom, #9a9a9a 0 1px, transparent 1px 2px) 5px 0 / 1px 100% no-repeat,
  repeating-linear-gradient(to right, #9a9a9a 0 1px, transparent 1px 2px) 5px 9px / 11px 1px no-repeat; }
.tw.end { background:
  repeating-linear-gradient(to bottom, #9a9a9a 0 1px, transparent 1px 2px) 5px 0 / 1px 9px no-repeat,
  repeating-linear-gradient(to right, #9a9a9a 0 1px, transparent 1px 2px) 5px 9px / 11px 1px no-repeat; }
.exp { width: 9px; height: 9px; border: 1px solid #98968a; background: linear-gradient(#000, #000) center / 5px 1px no-repeat, linear-gradient(#000, #000) center / 1px 5px no-repeat, #fff; }
.label { margin-left: 4px; white-space: nowrap; color: #111; }
.sp2 { letter-spacing: .2px; }
.sp3 { letter-spacing: .3px; }
.lroot { margin-left: 2px; }
.icwrap { position: relative; width: 16px; height: 16px; flex: none; }
.badge { position: absolute; left: 3px; top: 3px; width: 10px; height: 10px; font: bold 11px/10px "Liberation Serif", serif; text-align: center; color: #111; }
.ov { position: absolute; left: 4px; top: 5px; width: 10px; height: 10px; }
.rollback { height: 3px; margin: -1px 3px 0 1px; background: #ffec00; border-top: 1px solid #222; flex: none; }

.tabs { height: 23px; flex: none; display: flex; align-items: flex-start; }
.tab { height: 20px; margin-right: 3px; border: 1px solid #aca899; border-top: 0; border-radius: 0 0 3px 3px; display: flex; align-items: center; justify-content: center; overflow: hidden; }
.tab.active { width: 30px; height: 22px; margin-right: 0; border-color: #fff #8c897a #8c897a #ece9d8; background: #ece9d8; padding-bottom: 1px; }
.t2nd { width: 26px; padding-right: 3px; }
.t3rd { width: 25px; padding-right: 1px; }
.tabic { width: 18px; height: 18px; display: block; }

.view { width: 1020px; flex: none; display: flex; flex-direction: column; border-left: 1px solid #111; }
.viewrow { flex: 1; display: flex; min-height: 0; border-top: 1px solid #111; }
.canvas { width: 1001px; height: 880px; flex: none; background: linear-gradient(#0080ff, #c0c0c0); }
.scene { display: block; width: 1001px; height: 880px; }
.face { fill: #e2e2e8; stroke: #000; stroke-width: 1; }
.bandout { fill: url(#gr-out); }
.bandin { fill: url(#gr-in); }
.white, .whites { fill: #fff; }
.wall { fill: #e8e8fa; }
.wallg { fill: #b4b4c0; }
.edges polyline, .edges line { fill: none; stroke: #000; stroke-width: 1; }
.origin path { fill: none; stroke: #0c10d0; stroke-width: 1; }
.origin .fillb { fill: #0c10d0; stroke: none; }
.ax { font: 11px "Liberation Sans", Arial, sans-serif; }
.axy { fill: #148c34; }
.axx { fill: #d01818; }
.axz { fill: #1414a8; }

.vscroll { width: 17px; flex: none; display: flex; flex-direction: column; margin-right: 1px; }
.thumbv { height: 7px; background: #fff; border: 1px solid #222; border-top: 0; flex: none; }
.strack { flex: 1; background: repeating-conic-gradient(#fff 0 25%, #ece9d8 0 50%) 0 0 / 2px 2px; }
.sbtn { width: 17px; height: 17px; flex: none; display: flex; align-items: center; justify-content: center; background: #ece9d8; border: 1px solid #fff; border-right-color: #716f64; border-bottom-color: #716f64; }
.au, .ad, .al, .ar { width: 0; height: 0; border: 5px solid transparent; }
.au { border-top: 0; border-bottom-color: #aca899; }
.ad { border-bottom: 0; border-top-color: #aca899; }
.al { border-left: 0; border-right-color: #aca899; }
.ar { border-right: 0; border-left-color: #aca899; }
.hscroll { height: 17px; flex: none; display: flex; }
.thumbh { width: 7px; background: #fff; border: 1px solid #222; border-left: 0; flex: none; }
.corner { width: 18px; flex: none; background: #ece9d8; }

.rstrip { width: 30px; flex: none; border-left: 1px solid #fff; display: flex; flex-direction: column; }
.rsec { display: flex; flex-direction: column; align-items: center; padding: 5px 1px 0 0; flex: none; }
.rs1 { height: 131px; border-bottom: 1px solid #aca899; }
.rs2 { height: 58px; border-bottom: 1px solid #aca899; }
.rs3 { margin-top: 16px; height: 427px; border-top: 1px solid #aca899; border-bottom: 1px solid #aca899; }
.rb { width: 24px; height: 21.500px; flex: none; display: flex; align-items: center; justify-content: center; }
.rb.on { height: 22px; background: repeating-conic-gradient(#fff 0 25%, #ece9d8 0 50%) 0 0 / 2px 2px; border: 1px solid #d4d1c2; border-right-color: #fff; border-bottom-color: #fff; margin-top: 3px; }
.r20 { height: 20px; }
.r22 { height: 22px; }
.rs2 .hgrip { margin-bottom: 7px; }
.rs3 .hgrip { margin-bottom: 4px; }
.rsep { width: 20px; height: 1px; background: #b9b6a6; margin: 3px 0 4px; flex: none; }

.status { height: 18px; flex: none; display: flex; justify-content: flex-end; align-items: flex-end; gap: 3px; padding-right: 41px; border-top: 1px solid #fff; }
.pane { width: 5px; height: 16px; flex: none; border: 1px solid #c4c1b0; border-right-color: #ece9d8; border-bottom-color: #ece9d8; }
.pane.text { width: 95px; padding-left: 1px; font-size: 11px; line-height: 16px; color: #111; }
.taskbar { height: 3px; flex: none; display: flex; }
.tstart { width: 132px; background: #3e8e44; }
.trest { flex: 1; background: #2a62c8; }
```
